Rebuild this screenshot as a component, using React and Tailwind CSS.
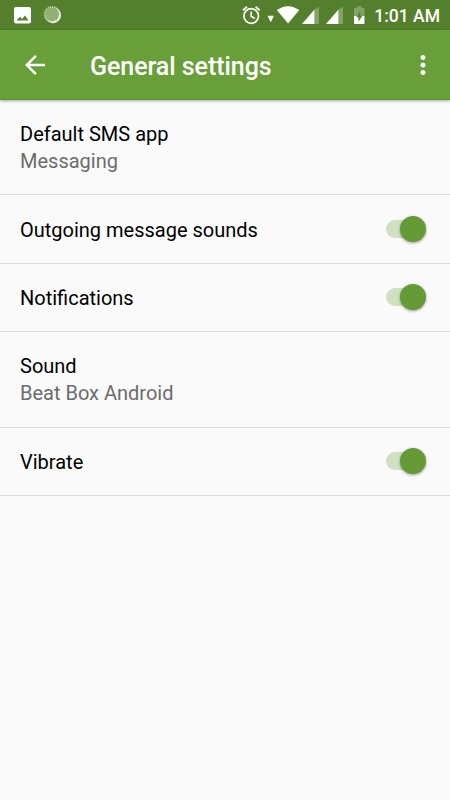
import React, { useState } from "react";

const settings = [
  { id: "sms", title: "Default SMS app", value: "Messaging", row: "h-[95px]" },
  { id: "outgoing", title: "Outgoing message sounds", toggle: true, row: "h-[69px]" },
  { id: "notifications", title: "Notifications", toggle: true, row: "h-[68px] pb-[1px]" },
  { id: "sound", title: "Sound", value: "Beat Box Android", row: "h-[96px] pb-[1px]" },
  { id: "vibrate", title: "Vibrate", toggle: true, row: "h-[68px] pb-[1px]" },
];

export default function App() {
  return (
    <div className="min-h-[800px] w-full flex flex-col bg-[#fafafa] font-['Roboto',sans-serif]">
      <StatusBar />
      <Toolbar />
      <SettingsList />
    </div>
  );
}

function StatusBar() {
  return (
    <div className="h-[30px] shrink-0 flex items-center justify-between pr-[10px] bg-[#547f2d] text-white">
      <svg width="66" height="30" viewBox="0 0 66 30">
        <path
          fill="#fff"
          fillRule="evenodd"
          d="M16 7h13a2 2 0 0 1 2 2v12.500a2 2 0 0 1-2 2H16a2 2 0 0 1-2-2V9a2 2 0 0 1 2-2zM16.500 20.500h12l-3.500-5-3 3.500-2-2.300z"
        />
        <circle cx="53" cy="15.200" r="8" fill="#fff" />
        <circle cx="52" cy="14.200" r="7.200" fill="#90b074" />
        <circle cx="52" cy="14.200" r="7.500" fill="none" stroke="#c3d4b3" strokeWidth="1.600" strokeDasharray="1.200 1" />
      </svg>

      <div className="flex items-center">
        <svg width="128" height="30" viewBox="240 0 128 30">
          {/* alarm */}
          <g fill="none" stroke="#fff" strokeWidth="1.700">
            <circle cx="251.200" cy="16" r="7.300" />
            <path d="M251.200 11.500v4.800l3.600 2.200" />
            <path d="M243 10.200l4-3.400M255.600 6.800l4 3.400" strokeWidth="1.800" />
          </g>
          {/* wifi */}
          <path fill="#fff" d="M267.500 15.700h6.500l-3.250 6.500z" />
          <path fill="#fff" d="M276.800 10.100Q288 2.200 299.300 10.100L288.050 23.500z" />
          {/* signal */}
          <path fill="#82a267" d="M314.500 9.500l4.500-3v17.500h-4.500z" />
          <path fill="#fff" d="M302 24l12.500-14.500V24z" />
          <path fill="#82a267" d="M338.500 9.500l4.500-3v17.500h-4.500z" />
          <path fill="#fff" d="M326 24l12.500-14.500V24z" />
          {/* battery */}
          <path fill="#82a267" d="M354 8h3V6.200h4.500V8h3v8H354z" />
          <path fill="#fff" d="M354 16h10.500v7a1 1 0 0 1-1 1H355a1 1 0 0 1-1-1z" />
          <path fill="#547f2d" d="M360.200 11l-4 6.200h2.300v4.600l4-6.300h-2.300z" />
        </svg>
        <span className="w-[66px] ml-[6px] mt-[2px] text-right text-[17.500px] leading-[20px] font-medium whitespace-nowrap">
          1:01 AM
        </span>
      </div>
    </div>
  );
}

function Toolbar() {
  return (
    <header className="h-[70px] shrink-0 flex items-center pl-5 pr-[12.500px] bg-[#689f38] border-b border-[#58961f] shadow-[0_1px_3px_rgba(0,0,0,0.35)] text-white">
      <button aria-label="Back">
        <svg width="30" height="30" viewBox="0 0 24 24" fill="currentColor">
          <path d="M20 11H7.830l5.590-5.590L12 4l-8 8 8 8 1.410-1.410L7.830 13H20v-2z" />
        </svg>
      </button>
      <h1 className="ml-10 mt-[5px] flex-1 text-[25px] leading-[30px] tracking-[-0.050px] font-medium">
        General settings
      </h1>
      <button aria-label="More options">
        <svg width="30" height="30" viewBox="0 0 24 24" fill="currentColor">
          <path d="M12 8c1.100 0 2-.9 2-2s-.9-2-2-2-2 .9-2 2 .9 2 2 2zm0 2c-1.100 0-2 .9-2 2s.9 2 2 2 2-.9 2-2-.9-2-2-2zm0 6c-1.100 0-2 .9-2 2s.9 2 2 2 2-.9 2-2-.9-2-2-2z" />
        </svg>
      </button>
    </header>
  );
}

function SettingsList() {
  const [enabled, setEnabled] = useState({ outgoing: true, notifications: true, vibrate: true });

  const flip = (id) => setEnabled((prev) => ({ ...prev, [id]: !prev[id] }));

  return (
    <main>
      {settings.map((s) => (
        <div
          key={s.id}
          className={`${s.row} flex items-center justify-between pl-5 pr-6 border-b border-[#dadada]`}
        >
          <div className="pt-[2px] text-[20px] leading-[27px]">
            <p className="text-black">{s.title}</p>
            {s.value && <p className="text-[#6c6c6c]">{s.value}</p>}
          </div>
          {s.toggle && <Toggle on={enabled[s.id]} onClick={() => flip(s.id)} />}
        </div>
      ))}
    </main>
  );
}

function Toggle({ on, onClick }) {
  return (
    <button
      role="switch"
      aria-checked={on}
      onClick={onClick}
      className={`w-10 h-[26px] flex items-center ${on ? "" : "flex-row-reverse"}`}
    >
      <span className={`w-[28px] h-[18px] shrink-0 rounded-full ${on ? "-mr-[14px] bg-[#d1e0c3]" : "-ml-[14px] bg-[#bdbdbd]"}`} />
      <span
        className={`relative size-[26px] shrink-0 rounded-full shadow-[0_1px_3px_rgba(0,0,0,0.4)] ${on ? "bg-[#649b35]" : "bg-[#f1f1f1]"}`}
      />
    </button>
  );
}
